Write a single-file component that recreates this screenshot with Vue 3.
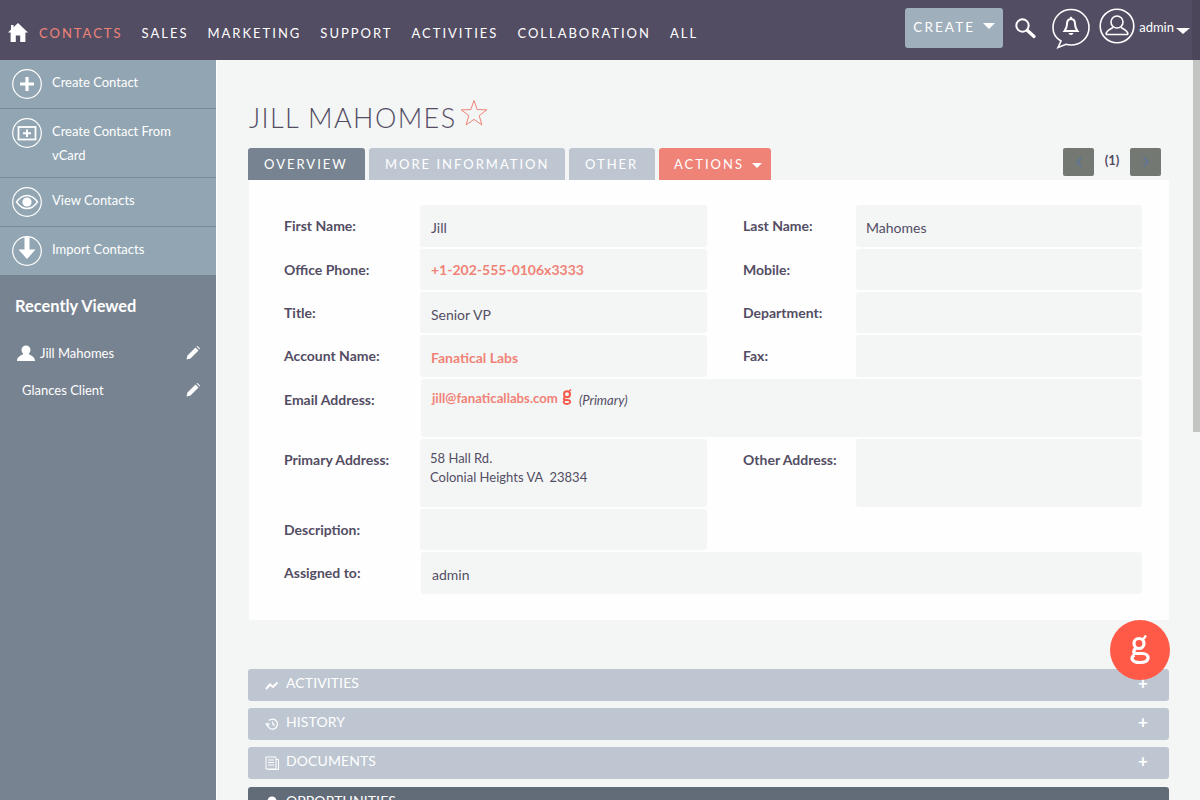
<script setup>
const nav = [
  { label: 'CONTACTS', active: true },
  { label: 'SALES' },
  { label: 'MARKETING' },
  { label: 'SUPPORT' },
  { label: 'ACTIVITIES' },
  { label: 'COLLABORATION' },
  { label: 'ALL' }
]
const tabs = [
  { label: 'OVERVIEW', kind: 'current' },
  { label: 'MORE INFORMATION', kind: 'idle more' },
  { label: 'OTHER', kind: 'idle other' }
]
</script>

<template>
  <div class="page">
    <header class="topbar">
      <nav class="nav">
        <svg class="home" viewBox="0 0 20 20" width="20" height="20">
          <path d="M10 1 L20 10.5 L17.4 10.5 L17.4 20 L12.2 20 L12.2 13.5 L7.8 13.5 L7.8 20 L2.6 20 L2.6 10.5 L0 10.5 L3 7.6 L3 3 L5.6 3 L5.6 5.2 Z" fill="#fff"/>
        </svg>
        <a v-for="n in nav" :key="n.label" class="nav-item" :class="{ active: n.active }">{{ n.label }}</a>
      </nav>
      <div class="tools">
        <button class="create">CREATE<span class="caret big"></span></button>
        <svg class="search" viewBox="0 0 22 22" width="22" height="22">
          <circle cx="8.5" cy="8.5" r="6.2" fill="none" stroke="#fff" stroke-width="2"/>
          <path d="M13.5 13.5 L20 19.5" stroke="#fff" stroke-width="3.2" stroke-linecap="round"/>
        </svg>
        <svg class="bell" viewBox="0 0 38 42" width="38" height="42">
          <path d="M9 33 C3.5 30 1 25 1 19.5 C1 9.5 9 1.5 19 1.5 C29 1.5 37 9.5 37 19.5 C37 29.5 29 37 19 37 C17 37 15.500 36.800 14 36.300 L6 39.500 Z" fill="none" stroke="#fff" stroke-width="1.6"/>
          <path d="M19 11 C16 11 15 13.500 15 16 C15 19 14 21 12.500 23 L25.500 23 C24 21 23 19 23 16 C23 13.500 22 11 19 11 Z" fill="none" stroke="#fff" stroke-width="2"/>
          <path d="M16.500 25 A2.600 2.600 0 0 0 21.500 25 Z" fill="#fff"/>
          <circle cx="19" cy="10" r="1.300" fill="#fff"/>
        </svg>
        <svg class="avatar" viewBox="0 0 36 36" width="36" height="36">
          <circle cx="18" cy="18" r="16.800" fill="none" stroke="#fff" stroke-width="1.600"/>
          <circle cx="18" cy="14" r="6" fill="none" stroke="#fff" stroke-width="1.600"/>
          <path d="M7 26.500 C7 22.500 11 21 14 19.500 M29 26.500 C29 22.500 25 21 22 19.500 M7 26.500 L29 26.500" fill="none" stroke="#fff" stroke-width="1.600"/>
        </svg>
        <span class="user">admin</span>
        <span class="user-caret"></span>
      </div>
    </header>

    <div class="body">
      <aside class="side">
        <ul class="actions">
          <li class="action">
            <svg class="a-icon" viewBox="0 0 30 30" width="30" height="30">
              <circle cx="15" cy="15" r="14.300" fill="none" stroke="#fff" stroke-width="1.200"/>
              <path d="M15 8 V22 M8 15 H22" stroke="#fff" stroke-width="3.200"/>
            </svg>
            <span>Create Contact</span>
          </li>
          <li class="action tall">
            <svg class="a-icon" viewBox="0 0 30 30" width="30" height="30">
              <circle cx="15" cy="15" r="14.300" fill="none" stroke="#fff" stroke-width="1.200"/>
              <rect x="6.500" y="9" width="17" height="12.500" fill="none" stroke="#fff" stroke-width="1.800"/>
              <path d="M15 11.500 V19 M11 15.200 H19" stroke="#fff" stroke-width="2"/>
            </svg>
            <span>Create Contact From vCard</span>
          </li>
          <li class="action">
            <svg class="a-icon" viewBox="0 0 30 30" width="30" height="30">
              <circle cx="15" cy="15" r="14.300" fill="none" stroke="#fff" stroke-width="1.200"/>
              <path d="M4.500 15 C8 10 11.500 8.500 15 8.500 C18.500 8.500 22 10 25.500 15 C22 20 18.500 21.500 15 21.500 C11.500 21.500 8 20 4.500 15 Z" fill="none" stroke="#fff" stroke-width="1.400"/>
              <circle cx="15" cy="15" r="4.600" fill="#fff"/>
            </svg>
            <span>View Contacts</span>
          </li>
          <li class="action">
            <svg class="a-icon" viewBox="0 0 30 30" width="30" height="30">
              <circle cx="15" cy="15" r="14.300" fill="none" stroke="#fff" stroke-width="1.200"/>
              <path d="M12.500 1 H17.500 V13.500 H23.500 L15 23 L6.500 13.500 H12.500 Z" fill="#fff"/>
            </svg>
            <span>Import Contacts</span>
          </li>
        </ul>
        <section class="recent">
          <h3 class="recent-title">Recently Viewed</h3>
          <div class="recent-row first">
            <svg viewBox="0 0 18 16" width="18" height="16">
              <circle cx="9" cy="5" r="4.500" fill="#fff"/>
              <path d="M0 16 C0 11.500 4 10.500 6.500 9 L11.500 9 C14 10.500 18 11.500 18 16 Z" fill="#fff"/>
            </svg>
            <span class="recent-name">Jill Mahomes</span>
            <svg class="pencil" viewBox="0 0 14 14" width="14" height="14">
              <path d="M0.500 13.500 L1.500 9.500 L9.500 1.500 L12.500 4.500 L4.500 12.500 Z" fill="#fff"/>
              <path d="M10.500 0.500 L11.500 0 L14 2.500 L13.500 3.500 Z" fill="#fff"/>
            </svg>
          </div>
          <div class="recent-row second">
            <span class="recent-name">Glances Client</span>
            <svg class="pencil" viewBox="0 0 14 14" width="14" height="14">
              <path d="M0.500 13.500 L1.500 9.500 L9.500 1.500 L12.500 4.500 L4.500 12.500 Z" fill="#fff"/>
              <path d="M10.500 0.500 L11.500 0 L14 2.500 L13.500 3.500 Z" fill="#fff"/>
            </svg>
          </div>
        </section>
      </aside>

      <main class="main">
        <div class="title-row">
          <h1 class="title">JILL MAHOMES</h1>
          <svg class="star" viewBox="0 0 28 28" width="28" height="28">
            <path d="M14 1.500 L17.200 10.600 L26.800 10.800 L19.200 16.600 L21.900 25.900 L14 20.400 L6.100 25.900 L8.800 16.600 L1.200 10.800 L10.800 10.600 Z" fill="none" stroke="#f08377" stroke-width="1"/>
          </svg>
        </div>

        <div class="tabbar">
          <div v-for="t in tabs" :key="t.label" class="tab" :class="t.kind">{{ t.label }}</div>
          <div class="tab action-tab">ACTIONS<span class="caret small"></span></div>
          <div class="pager">
            <span class="page-btn">
              <svg viewBox="0 0 8 12" width="8" height="12"><path d="M6.500 1.500 L2 6 L6.500 10.500" fill="none" stroke="#5f7590" stroke-width="1.800"/></svg>
            </span>
            <span class="page-num">(1)</span>
            <span class="page-btn">
              <svg viewBox="0 0 8 12" width="8" height="12"><path d="M1.500 1.500 L6 6 L1.500 10.500" fill="none" stroke="#5f7590" stroke-width="1.800"/></svg>
            </span>
          </div>
        </div>

        <section class="detail">
          <div class="label">First Name:</div>
          <div class="value low">Jill</div>
          <div class="label right">Last Name:</div>
          <div class="value low tight">Mahomes</div>

          <div class="label">Office Phone:</div>
          <div class="value link bold">+1-202-555-0106x3333</div>
          <div class="label right">Mobile:</div>
          <div class="value"></div>

          <div class="label">Title:</div>
          <div class="value low">Senior VP</div>
          <div class="label right">Department:</div>
          <div class="value"></div>

          <div class="label">Account Name:</div>
          <div class="value low link bold">Fanatical Labs</div>
          <div class="label right">Fax:</div>
          <div class="value"></div>

          <div class="label">Email Address:</div>
          <div class="value wide email">
            <span class="link mail">jill@fanaticallabs.com</span>
            <svg class="mini-g" viewBox="0 0 10 16" width="10" height="16">
              <circle cx="5" cy="5.200" r="3" fill="none" stroke="#f4594a" stroke-width="2"/>
              <path d="M7 2.500 L9 0.500" stroke="#f4594a" stroke-width="1.500"/>
              <path d="M3 8 C0.500 10.500 2 11 5 11 C9 11 9.500 15 5 15 C1.500 15 0.500 12.500 3 11.500" fill="none" stroke="#f4594a" stroke-width="1.800"/>
            </svg>
            <em class="primary">(Primary)</em>
          </div>

          <div class="label">Primary Address:</div>
          <div class="value address">58 Hall Rd.<br />Colonial Heights VA&nbsp;&nbsp;23834</div>
          <div class="label right">Other Address:</div>
          <div class="value"></div>

          <div class="label">Description:</div>
          <div class="value"></div>
          <div class="blank"></div>
          <div class="blank"></div>

          <div class="label">Assigned to:</div>
          <div class="value wide low">admin</div>
        </section>

        <div class="panels">
          <div class="panel">
            <svg viewBox="0 0 14 14" width="14" height="14"><path d="M1 11 L5 6.500 L8 9 L12.500 4.500" fill="none" stroke="#fff" stroke-width="2"/></svg>
            <span>ACTIVITIES</span><b class="plus">+</b>
          </div>
          <div class="panel">
            <svg viewBox="0 0 14 14" width="14" height="14">
              <path d="M2.500 8 A5 5 0 1 0 4 3.500" fill="none" stroke="#fff" stroke-width="1.300"/>
              <path d="M0.500 6.500 L4.500 6.500 L2.500 9.500 Z M7.500 4 V7.500 L10 9" fill="#fff" stroke="#fff" stroke-width="0.500"/>
            </svg>
            <span>HISTORY</span><b class="plus">+</b>
          </div>
          <div class="panel">
            <svg viewBox="0 0 14 14" width="14" height="14">
              <path d="M1 1 H11 V13 H1 Z M11 3.500 H13.500 V13.500 H3 M3 4 H9 M3 6.500 H9 M3 9 H9" fill="none" stroke="#fff" stroke-width="1"/>
            </svg>
            <span>DOCUMENTS</span><b class="plus">+</b>
          </div>
          <div class="panel open">
            <svg viewBox="0 0 14 14" width="14" height="14"><circle cx="7" cy="7" r="4.500" fill="#fff"/></svg>
            <span>OPPORTUNITIES</span>
          </div>
        </div>
      </main>
    </div>

    <div class="scroll-track"></div>
    <div class="scroll-thumb"></div>

    <button class="fab" aria-label="Glances">
      <svg viewBox="0 0 20 30" width="20" height="30">
        <circle cx="9" cy="8.500" r="5" fill="none" stroke="#fff" stroke-width="3.200"/>
        <path d="M13 4.500 L16 0.500" stroke="#fff" stroke-width="2.400"/>
        <path d="M6 13.500 C3 15 3 18 6 18.500 L13 18.500 C20 19 20.500 27.500 10 27.500 C1.500 27.500 0 22.500 4.500 20" fill="none" stroke="#fff" stroke-width="3.200"/>
      </svg>
    </button>
  </div>
</template>

<style>
html, body { margin: 0; overflow: hidden; }
</style>

<style scoped>
.page {
  position: relative;
  width: 1200px;
  height: 800px;
  overflow: hidden;
  background: #f4f6f5;
  font-family: Lato, "Liberation Sans", sans-serif;
  color: #534d64;
}

/* top bar */
.topbar {
  height: 60px;
  background: #534d64;
  display: flex;
  justify-content: space-between;
  color: #fff;
}
.nav {
  display: flex;
  align-items: center;
  padding-left: 8px;
}
.home { margin-right: 11px; margin-top: 3px; }
.nav-item {
  position: relative;
  font-size: 13px;
  letter-spacing: 2px;
  margin-right: 19px;
  line-height: 60px;
  margin-top: 6px;
}
.nav-item.active { color: #f08377; }
.nav-item.active::before {
  content: "";
  position: absolute;
  left: 0;
  right: -1px;
  top: -6px;
  height: 3px;
  background: #f08377;
}
.tools {
  display: flex;
  align-items: flex-start;
  padding-top: 8px;
  padding-right: 10px;
}
.create {
  width: 98px;
  height: 40px;
  background: #9fb0bc;
  border: 0;
  border-radius: 3px;
  color: #fff;
  font: 13.5px Lato, "Liberation Sans", sans-serif;
  letter-spacing: 2.1px;
  padding: 0 0 2px 0;
  display: flex;
  align-items: center;
  justify-content: center;
}
.caret {
  display: inline-block;
  margin-left: 8px;
  margin-bottom: 3px;
  border-left: 5.500px solid transparent;
  border-right: 5.500px solid transparent;
  border-top: 5.500px solid #fff;
}
.caret.big {
  border-left-width: 6px;
  border-right-width: 6px;
  border-top-width: 6px;
}
.caret.small { margin-bottom: 1px; }
.search { margin: 9px 0 0 11px; }
.bell { margin: 0 0 0 16px; }
.avatar { margin: 0 0 0 9px; }
.user { font-size: 13px; margin: 11px 0 0 4px; }
.user-caret {
  margin: 20px 0 0 2px;
  border-left: 7px solid transparent;
  border-right: 7px solid transparent;
  border-top: 6px solid #fff;
  height: 0;
}

.body { display: flex; height: 740px; }

/* sidebar */
.side {
  width: 216px;
  flex: none;
  background: #778390;
  color: #fff;
  border-right: 1px solid #fff;
  box-sizing: content-box;
}
.actions {
  list-style: none;
  margin: 0;
  padding: 0;
  background: #92a5b2;
}
.action {
  display: flex;
  align-items: flex-start;
  gap: 10px;
  padding: 9px 12px 8px;
  height: 31px;
  border-bottom: 1px solid #77899a;
  font-size: 13px;
  line-height: 24px;
}
.action span { margin-top: 1px; }
.action.tall { height: 52px; padding-bottom: 7px; }
.action:last-child { border-bottom: 0; height: 31px; }
.a-icon { flex: none; }
.recent { padding: 0 15px; }
.recent-title {
  font-size: 16.4px;
  font-weight: 700;
  margin: 0;
  padding-top: 21px;
  line-height: 20px;
}
.recent-row {
  display: flex;
  align-items: center;
  font-size: 13px;
  height: 20px;
}
.recent-row.first { margin-top: 27px; padding-left: 2px; }
.recent-row.second { margin-top: 17px; padding-left: 7px; }
.recent-name { margin-left: 5px; }
.recent-row.second .recent-name { margin-left: 0; }
.pencil { margin-left: auto; margin-right: 1px; }

/* main */
.main {
  flex: 1;
  min-width: 0;
  padding: 0 31px 0 31px;
}
.title-row {
  display: flex;
  align-items: flex-start;
  height: 88px;
  padding-left: 1px;
}
.title {
  margin: 41px 0 0;
  font-size: 27px;
  font-weight: 300;
  letter-spacing: 1.4px;
  line-height: 34px;
}
.star { margin: 39px 0 0 4px; }
.tabbar {
  display: flex;
  gap: 4px;
  height: 32px;
}
.tab {
  height: 32px;
  line-height: 32px;
  padding: 0 0 0 16px;
  box-sizing: border-box;
  border-radius: 3px 3px 0 0;
  color: #fff;
  font-size: 13px;
  letter-spacing: 2px;
  white-space: nowrap;
}
.tab.current { background: #778390; width: 117px; }
.tab.idle { background: #bec6d1; }
.tab.more { width: 196px; }
.tab.other { width: 86px; }
.action-tab { background: #f08377; width: 112px; padding-left: 15px; }
.pager {
  margin-left: auto;
  margin-right: 8px;
  display: flex;
  align-items: flex-start;
  height: 28px;
}
.page-btn {
  width: 31px;
  height: 28px;
  background: #737873;
  border-radius: 2px;
  display: flex;
  align-items: center;
  justify-content: center;
}
.page-num {
  width: 36px;
  text-align: center;
  font-size: 13px;
  font-weight: 700;
  line-height: 25px;
}

.detail {
  background: #fefefe;
  height: 440px;
  box-sizing: border-box;
  padding: 25px 27px 0 35px;
  display: grid;
  grid-template-columns: 136px 287px 149px 286px;
  grid-template-rows: 42px 41px 41px 42px 58px 68px 41px 42px;
  row-gap: 2px;
  border-radius: 0 0 2px 2px;
  margin-left: 1px;
}
.label {
  font-size: 14px;
  font-weight: 700;
  line-height: 20px;
  padding-top: 11px;
  white-space: nowrap;
}
.label.right { padding-left: 36px; }
.value {
  background: #f4f6f5;
  border-radius: 3px;
  font-size: 14px;
  padding: 13px 11px 0;
  line-height: 20px;
  box-sizing: border-box;
}
.value.low { padding-top: 13px; }
.value.tight { padding-left: 10px; }
.value.link { padding-top: 11px; }
.value.low.link { padding-top: 13px; }
.value.wide { grid-column: 2 / 5; margin-left: 1px; padding-left: 11px; }
.link { color: #f08377; }
.bold { font-weight: 700; }
.email {
  display: flex;
  align-items: flex-start;
  padding-top: 9px;
  padding-left: 10px;
}
.mail { font-weight: 700; font-size: 13.2px; line-height: 20px; }
.mini-g { margin: 1px 0 0 4px; }
.primary { font-size: 13px; margin-left: 7px; line-height: 24px; }
.address { padding: 10px 10px 0; font-size: 13px; line-height: 19px; }

.panels {
  margin-top: 49px;
  display: flex;
  flex-direction: column;
  gap: 7px;
}
.panel {
  height: 32px;
  box-sizing: border-box;
  border-radius: 3px;
  background: #bec6d1;
  color: #fff;
  font-size: 14px;
  display: flex;
  align-items: center;
  padding: 0 21px 5px 17px;
  gap: 7px;
  letter-spacing: 0.1px;
}
.panel svg { margin-top: 4px; }
.panel.open { background: #626c78; height: 40px; align-items: flex-start; padding-top: 5px; margin-top: 1px; }
.panel.open svg { margin-top: 2px; }
.plus {
  margin-left: auto;
  font-size: 17px;
  font-weight: 700;
  line-height: 20px;
}

/* overlays */
.scroll-track {
  position: absolute;
  top: 0;
  right: 0;
  width: 8px;
  height: 60px;
  background: #4b4659;
}
.scroll-thumb {
  position: absolute;
  top: 60px;
  right: 0;
  width: 7px;
  height: 372px;
  background: #c2c5c1;
}
.fab {
  position: absolute;
  left: 1110px;
  top: 620px;
  width: 60px;
  height: 60px;
  border: 0;
  border-radius: 50%;
  background: #ff5a47;
  padding: 0;
  display: flex;
  align-items: center;
  justify-content: center;
}
</style>
